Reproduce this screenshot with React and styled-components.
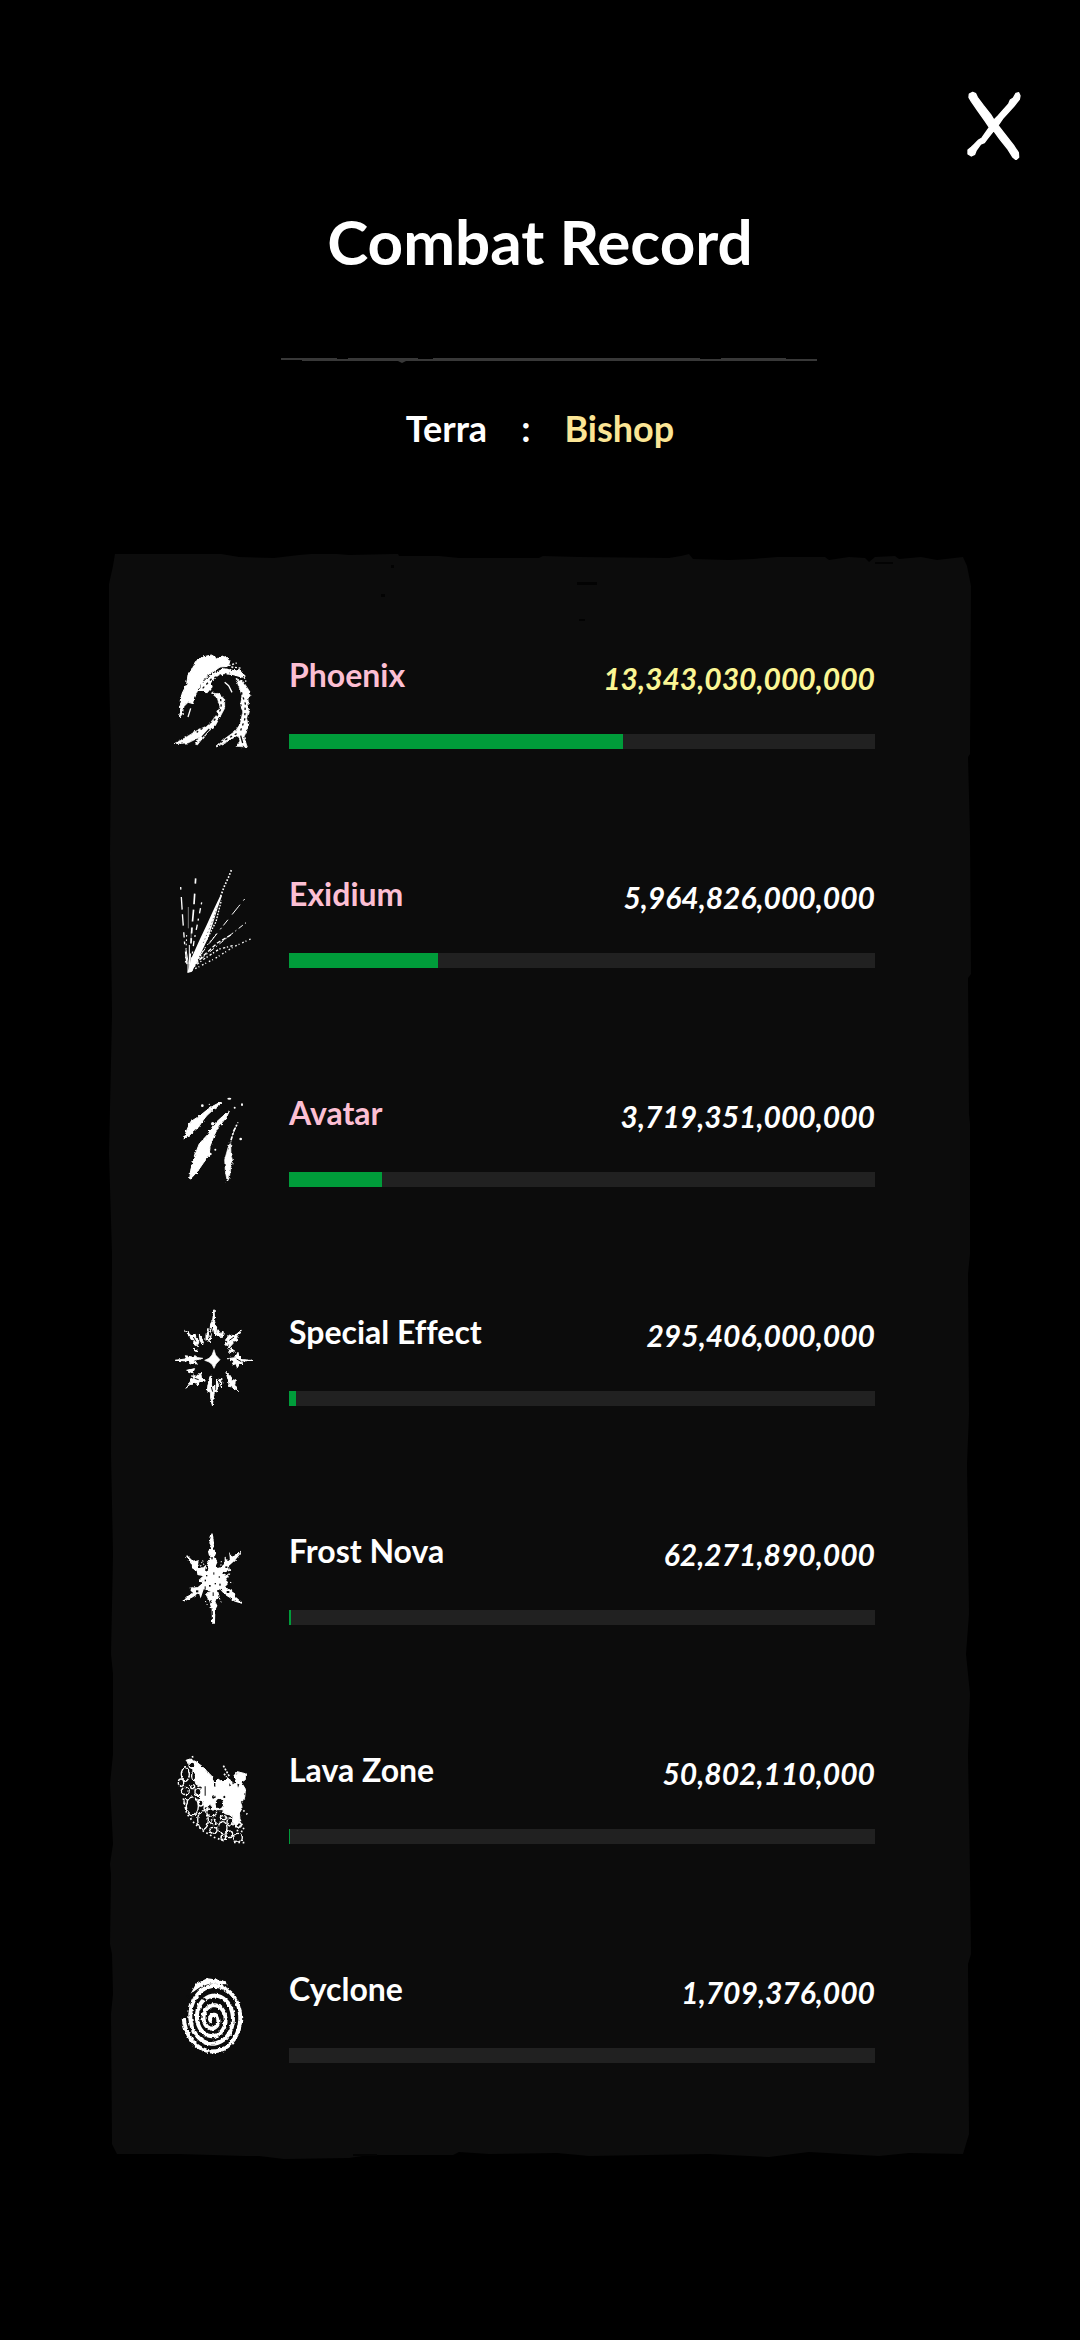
import React from 'react'
import styled, { createGlobalStyle } from "styled-components"

const GlobalStyle = createGlobalStyle`
    * {
        box-sizing: border-box;
    }
    body {
        margin: 0;
        background-color: #000000;
        color: #ffffff;
        font-family: Lato, "Open Sans", sans-serif;
        font-variant-ligatures: none;
    }
`
const Page = styled.main`
    min-height: 100vh;
    display: flex;
    flex-direction: column;
    background-color: #000000;
`
const TopBar = styled.div`
    display: flex;
    justify-content: flex-end;
    padding: 90px 56px 0;
`
const CloseButton = styled.button`
    width: 60px;
    height: 70px;
    padding: 0;
    border: 0;
    background: none;
    cursor: pointer;
    svg {
        display: block;
        width: 100%;
        height: 100%;
    }
`
const Header = styled.header`
    display: flex;
    flex-direction: column;
    align-items: center;
    padding-top: 45px;
`
const Title = styled.h1`
    margin: 0;
    font-size: 62px;
    line-height: 72px;
    font-weight: 700;
`
const Divider = styled.svg`
    width: 560px;
    height: 6px;
    margin: 80px 0 45px;
`
const Hero = styled.p`
    display: flex;
    gap: 34px;
    margin: 0;
    font-size: 36px;
    line-height: 40px;
    font-weight: 700;
`
const HeroClass = styled.span`
    color: #fbe595;
`
const Panel = styled.section`
    position: relative;
    margin: 106px 109px 0;
    padding: 95px 96px 84px 61px;
`
const PanelPaper = styled.svg`
    position: absolute;
    inset: 0;
    width: 100%;
    height: 100%;
`
const SkillList = styled.ul`
    position: relative;
    display: flex;
    flex-direction: column;
    gap: 107px;
    margin: 0;
    padding: 0;
    list-style: none;
`
const SkillRow = styled.li`
    display: flex;
    gap: 31px;
    height: 112px;
`
const SkillIcon = styled.svg`
    flex: none;
    width: 88px;
    height: 112px;
    overflow: visible;
`
const SkillBody = styled.div`
    flex: 1;
    padding-top: 6px;
`
const SkillText = styled.div`
    display: flex;
    justify-content: space-between;
    align-items: flex-start;
    font-weight: 700;
`
const SkillName = styled.span`
    font-size: 32px;
    line-height: 40px;
    color: ${props => props.$main ? "#fcbfd3" : "#ffffff"};
`
const SkillValue = styled.span`
    font-size: 30px;
    line-height: 46px;
    font-style: italic;
    color: ${props => props.$top ? "#fbf694" : "#ffffff"};
`
const Bar = styled.div`
    height: 15px;
    margin-top: 33px;
    background-color: #212121;
`
const BarFill = styled.div`
    height: 100%;
    background-color: #009c3a;
`

const Wave = () => (
    <g>
        <path filter="url(#rough)" stroke="#ffffff" strokeWidth="3" d="M59 258 L62 232 60 212 67 186 80 160 84 132 97 114 106 92 128 78 154 72 172 82 194 76 210 88 205 106 180 108 160 122 142 132 130 150 116 170 104 200 100 218 84 214 72 226 66 250z" />
        <path filter="url(#rough)" d="M116 180 L124 160 140 142 156 128 192 112 224 118 236 114 258 136 246 140 218 132 190 130 168 138 154 154 158 168 140 188 128 180z" />
        <path filter="url(#rough)" stroke="#ffffff" strokeWidth="2" d="M228 142 L250 152 272 186 264 200 266 238 260 262 266 286 252 318 262 348 228 346 240 330 234 312 206 330 168 348 196 322 226 300 240 280 248 244 242 220 246 190 236 166z" />
        <path filter="url(#rough)" stroke="#ffffff" strokeWidth="2" d="M154 186 L178 188 194 206 194 232 180 258 166 284 140 306 112 342 104 338 120 318 84 336 42 338 76 320 108 300 146 282 168 254 180 228 172 202z" />
        <g stroke="#ffffff" strokeWidth="4" fill="none">
            <path d="M92 232 L84 258M194 154 L206 164 216 184" />
            <path strokeDasharray="6 5" d="M206 104 L230 96 M214 108 L246 112 M252 138 L258 152 M142 150 L164 128 M156 146 L144 164" />
        </g>
        <g stroke="#0c0c0c" strokeWidth="4" fill="none">
            <path strokeDasharray="7 9" d="M182 204 L184 232 164 266 110 304 M244 184 L256 218 254 266 240 304 M182 334 L230 308 M128 172 L156 142 210 126" />
            <path d="M242 314 L248 336 M148 294 L126 318" />
        </g>
    </g>
)

const Rays = () => (
    <g stroke="#ffffff" fill="none">
        <path stroke="none" fill="#ffffff" d="M82 366 L96 362 122 308 142 266 158 220 174 168 186 134 180 136 158 182 140 222 120 264 94 322z" />
        <path stroke="#777777" strokeWidth="3" strokeDasharray="4 7" d="M172 170 L152 224 128 280" />
        <path strokeWidth="3" d="M84 364 L84 332 78 296 M88 350 L88 282 M92 352 L102 310" />
        <path strokeWidth="5" strokeDasharray="5 5" d="M182 136 L192 108 205 80 215 55" />
        <path strokeWidth="4" strokeDasharray="5 4" d="M140 266 L168 212 184 148 M102 346 L126 306" />
        <path stroke="#777777" strokeWidth="3" d="M85 168 L85 232 M94 230 L93 272" />
        <path strokeWidth="4" strokeDasharray="8 22 38 14 34 20 16 12" d="M62 108 L68 200 74 280 82 350" />
        <path strokeWidth="5" strokeDasharray="16 30 32 16 36 18 18 14" d="M107 82 L102 160 96 230 88 350" />
        <path strokeWidth="4" strokeDasharray="6 12 16 16" d="M125 154 L116 200 102 270 92 346" />
        <path strokeWidth="3" strokeDasharray="6 16 38 20 22 9" d="M254 144 L236 166 180 236 96 344" />
        <path strokeWidth="3" strokeDasharray="4 8 16 9" d="M258 215 L206 256 150 302 92 350" />
        <path strokeWidth="4" strokeDasharray="5 9 3 6" d="M272 264 L220 288 166 322 92 360" />
        <path strokeWidth="4" strokeDasharray="7 7 4 5" d="M218 284 L178 294 132 324 92 354" />
        <path strokeWidth="4" strokeDasharray="12 6" d="M212 252 L172 276 126 318 98 348" />
        <path strokeWidth="3" strokeDasharray="5 8" d="M170 248 L132 294 110 330 M80 252 L76 340" />
    </g>
)

const Claws = () => (
    <g>
        <path filter="url(#rough)" stroke="#ffffff" strokeWidth="3" d="M72 175 L81 146 92 122 120 104 150 80 180 64 186 66 164 82 140 104 126 122 116 138 94 158z" />
        <path filter="url(#rough)" stroke="#ffffff" strokeWidth="3" d="M89 296 L92 268 104 224 118 188 142 162 162 130 188 106 208 90 200 108 174 140 162 164 150 196 148 222 130 246 112 272z" />
        <path filter="url(#rough)" stroke="#ffffff" strokeWidth="2" d="M202 302 L196 272 194 236 204 200 212 182 213 220 218 240 212 264 208 290z" />
        <path stroke="#ffffff" strokeWidth="5" strokeDasharray="12 5 5 6" d="M213 178 L221 150 234 124" />
        <g>
            <ellipse cx="208" cy="53" rx="6" ry="3" />
            <ellipse cx="246" cy="71" rx="3" ry="4" />
            <circle cx="224" cy="80" r="3" />
            <circle cx="127" cy="74" r="4" />
            <circle cx="148" cy="70" r="2" />
            <circle cx="242" cy="174" r="4" />
            <circle cx="166" cy="206" r="3" />
            <circle cx="151" cy="219" r="4" />
            <circle cx="158" cy="128" r="5" />
        </g>
    </g>
)

const Burst = () => (
    <g>
        <path stroke="#ffffff" strokeWidth="2" d="M162 176 L167 192 180 206 168 219 162 232 156 220 147 213 134 208 147 202 156 192z" />
        <g filter="url(#rough)" stroke="#ffffff" strokeWidth="3">
            <path d="M162 56 L164 92 170 110 168 126 172 132 164 130 160 110 154 124 150 118 152 98 158 88z" />
            <path d="M144 112 L146 134 138 148 138 130z M154 128 L150 156 145 148z M174 116 L182 128 190 122 188 136 178 136 170 128z" />
            <path d="M74 118 L96 132 106 130 108 142 118 150 112 164 100 158 104 148 94 146 88 134z M118 132 L130 150 128 162 120 148z M100 170 L114 182 104 180z" />
            <path d="M244 118 L224 134 208 132 196 148 204 150 196 164 208 158 206 172 220 156 218 148 228 150 232 136z M212 172 L224 180 206 184z" />
            <path d="M46 208 L80 204 76 194 96 198 106 194 112 200 128 202 104 208 112 220 98 216 92 220 82 210z" />
            <path d="M276 208 L248 206 236 194 234 184 226 200 202 203 222 209 216 222 228 218 232 230 240 216 246 222 248 210z" />
            <path d="M78 292 L92 274 88 264 102 264 98 254 114 256 122 244 124 258 136 270 118 272 112 282 104 272 98 280 90 280z M80 238 L104 232 98 246z" />
            <path d="M236 304 L222 290 208 286 206 272 198 244 210 256 216 266 226 268 224 282z" />
            <path d="M157 344 L152 320 152 304 142 300 144 280 150 256 155 256 154 282 162 298 164 282 164 300 160 318z M170 264 L176 284 168 304z M178 268 L186 262 184 288z" />
        </g>
        <path stroke="#ffffff" strokeWidth="3" d="M46 208 H80 M248 208 H276 M161 56 V88 M157 318 V344" />
        <path stroke="#0c0c0c" strokeWidth="3" d="M158 108 L154 120 M100 138 L108 152 M222 138 L208 148 M230 204 L244 212 M104 262 L116 266 M154 288 L158 302" />
    </g>
)

const Frost = () => (
    <g>
        <path filter="url(#rough)" stroke="#ffffff" strokeWidth="4" d="M156 68 L160 96 158 112 166 124 160 138 170 154 162 172 182 172 196 158 196 144 204 154 212 146 210 130 218 140 242 124 224 146 204 164 208 178 186 184 194 196 206 192 194 206 204 216 190 230 204 234 218 242 222 256 246 276 224 270 206 256 196 250 180 232 172 238 178 262 168 262 164 272 170 284 164 296 163 336 158 336 157 296 152 280 160 262 148 268 140 252 152 238 130 232 122 256 118 244 96 258 72 270 86 256 102 244 92 232 114 230 124 222 130 210 118 208 132 194 114 190 112 178 100 174 96 160 80 134 100 154 114 150 112 162 128 174 136 166 132 184 148 176 142 158 152 146 146 122 156 108 150 96z" />
        <g fill="#0c0c0c">
            <rect x="138" y="192" width="4" height="4" />
            <rect x="134" y="206" width="4" height="5" />
            <rect x="160" y="184" width="3" height="7" />
            <rect x="176" y="196" width="4" height="4" />
            <rect x="164" y="216" width="4" height="4" />
            <rect x="178" y="218" width="4" height="6" />
            <rect x="147" y="222" width="5" height="5" />
            <rect x="154" y="138" width="4" height="7" />
            <rect x="114" y="164" width="7" height="7" />
            <rect x="196" y="166" width="6" height="5" />
            <rect x="200" y="240" width="8" height="6" />
            <rect x="108" y="238" width="7" height="6" />
            <rect x="134" y="226" width="3" height="9" />
            <rect x="158" y="244" width="3" height="11" />
        </g>
        <path stroke="#ffffff" strokeWidth="3" strokeDasharray="4 6" fill="none" d="M128 148 L134 172 M184 150 L182 170 M210 214 L220 216 M178 262 L184 274 M136 270 L142 282 M94 230 L104 228 M204 200 L208 184 M122 166 L126 152" />
    </g>
)

const lavaCells = [
    [76, 100, 12, 20], [96, 72, 9, 9], [101, 106, 6, 13], [63, 125, 8, 11], [76, 150, 12, 11],
    [98, 137, 6, 6], [114, 153, 9, 11], [97, 196, 18, 28], [77, 183, 5, 8], [122, 186, 7, 9],
    [129, 237, 16, 28], [160, 168, 6, 7], [178, 188, 13, 17], [193, 168, 5, 6], [155, 214, 15, 11],
    [160, 243, 8, 8], [188, 260, 13, 18], [210, 243, 9, 12], [160, 268, 11, 9], [234, 290, 13, 13],
    [208, 280, 10, 10], [236, 252, 8, 7], [138, 202, 6, 5], [190, 230, 9, 6], [190, 289, 7, 7]
]

const Lava = () => (
    <g>
        <path filter="url(#rough)" stroke="#ffffff" strokeWidth="3" d="M78 58 L90 54 108 62 126 76 142 92 154 104 162 126 174 114 188 124 202 110 216 122 216 132 228 126 222 104 232 92 256 98 256 116 244 124 256 144 254 172 242 180 246 202 238 216 240 234 236 262 220 250 218 224 194 218 188 206 164 206 150 190 134 202 128 180 118 168 124 138 108 130 100 104 98 80z" />
        <path stroke="#ffffff" strokeWidth="5" strokeDasharray="6 4" fill="none" d="M190 74 L200 92 208 106 M192 98 L200 108" />
        <g fill="#0c0c0c" stroke="#ffffff" strokeWidth="4" filter="url(#rough)">
            {lavaCells.map(([x, y, rx, ry]) => (
                <ellipse key={x + "-" + y} cx={x} cy={y} rx={rx} ry={ry} />
            ))}
        </g>
        <path stroke="#ffffff" strokeWidth="5" strokeDasharray="5 8" fill="none" d="M97 45 L100 56 M70 172 L80 218 104 248 130 270 160 288 194 300 M222 304 L260 305 M250 208 L262 220 M240 236 L252 266 M230 268 L248 272" />
        <path fill="#0c0c0c" d="M134 136 L137 136 137 164 134 164z M162 126 L166 126 166 138 162 136z M232 128 L238 130 234 140z M208 126 L213 134 208 136z" />
    </g>
)

const spiral = () => {
    const points = []
    for (let turn = 0.15; turn <= 4.3; turn += 0.025) {
        const angle = turn * Math.PI * 2 + 1.2
        const x = 157 + turn * 21 * Math.cos(angle) + turn
        const y = 178 + turn * 26 * Math.sin(angle) - turn * 3
        points.push(x.toFixed(1) + " " + y.toFixed(1))
    }
    return "M" + points.join("L")
}

const Cyclone = () => (
    <g>
        <path filter="url(#rough)" d={spiral()} fill="none" stroke="#ffffff" strokeWidth="12" />
        <path filter="url(#rough)" d="M92 98 L108 68 142 52 188 58 205 70 150 68 124 76z" />
        <path d="M80 104 L90 112 M194 100 L204 106 M208 72 L202 80 M146 272 L150 288 M130 112 L138 118" stroke="#0c0c0c" strokeWidth="6" />
    </g>
)

const skills = [
    { name: "Phoenix", value: 13343030000000, main: true, box: "30 54 264 336", Icon: Wave },
    { name: "Exidium", value: 5964826000000, main: true, box: "30 51 264 336", Icon: Rays },
    { name: "Avatar", value: 3719351000000, main: true, box: "30 18 264 336", Icon: Claws },
    { name: "Special Effect", value: 295406000000, box: "30 45 264 336", Icon: Burst },
    { name: "Frost Nova", value: 62271890000, box: "30 42 264 336", Icon: Frost },
    { name: "Lava Zone", value: 50802110000, box: "30 9 264 336", Icon: Lava },
    { name: "Cyclone", value: 1709376000, box: "30 6 264 336", Icon: Cyclone }
]
const total = skills.reduce((sum, skill) => sum + skill.value, 0)

const App = () => {
  return (
    <Page>
        <GlobalStyle />
        <TopBar>
                <CloseButton aria-label="Close">
                        <svg viewBox="72 60 180 210" fill="#ffffff" stroke="#ffffff" strokeWidth="4" strokeLinejoin="round">
                                <path d="M88 72 L98 67 107 71 112 82 130 106 152 134 162 150 174 138 206 102 211 90 220 84 228 70 236 68 240 77 238 88 222 108 188 146 174 166 202 202 222 228 235 248 236 262 228 269 219 262 204 238 180 208 161 182 142 206 133 218 122 222 108 242 104 253 94 258 84 252 84 240 94 232 102 224 116 210 126 204 148 172 136 154 112 120 94 94 87 82z" />
                        </svg>
                </CloseButton>
        </TopBar>
        <Header>
                <Title>Combat Record</Title>
                <Divider viewBox="0 0 560 6" fill="#383838" aria-hidden="true">
                        <path d="M21 1H77V2H88V1H158V2H173V1H440V2H461V1H526V2H557V4H146L142 6 138 4H42V3H21z" />
                </Divider>
                <Hero>
                        <span>Terra</span>
                        <span>:</span>
                        <HeroClass>Bishop</HeroClass>
                </Hero>
        </Header>
        <Panel>
                <PanelPaper viewBox="0 0 862 1605" preserveAspectRatio="none" fill="#0c0c0c" aria-hidden="true">
                        <defs>
                                <filter id="rough" x="-10%" y="-10%" width="120%" height="120%" colorInterpolationFilters="sRGB">
                                        <feTurbulence type="fractalNoise" baseFrequency="0.11" numOctaves="2" seed="4" result="noise" />
                                        <feDisplacementMap in="SourceGraphic" in2="noise" scale="10" xChannelSelector="R" yChannelSelector="G" />
                                </filter>
                        </defs>
                        <path d="M6 0 L70 -1 112 0 130 3 165 4 190 1 215 -1 240 1 284 0 287 -4 290 2 330 2 350 4 430 4 434 2 470 3 560 4 572 2 580 0 584 5 620 6 644 5 668 3 716 3 720 6 740 3 756 4 760 8 766 3 786 2 790 5 812 3 828 6 854 3 858 12 862 32 861 200 859 203 861 280 862 420 859 424 860 560 861 570 861 700 859 720 860 860 858 910 860 1060 857 1100 861 1140 859 1200 861 1320 862 1400 859 1410 860 1580 854 1600 800 1599 770 1602 700 1598 660 1603 600 1600 480 1602 448 1599 380 1600 350 1598 344 1601 260 1601 240 1604 175 1605 150 1602 136 1602 70 1600 8 1600 3 1590 2 1460 4 1440 3 1400 1 1390 2 1320 1 1310 4 1290 1 1230 4 1200 4 1120 2 1100 4 1000 2 900 3 700 0 600 3 460 1 300 2 200 0 120 0 30 4 12z" />
                        <path fill="#030303" d="M468 28H488V31H468z M470 65H476V67H470z M272 40H276V43H272z M282 11H285V14H282z M766 8H784V10H766z M244 1600H268V1602H244z" />
                </PanelPaper>
                <SkillList>
                        {skills.map(({ name, value, main, box, Icon }, index) => (
                                <SkillRow key={name}>
                                        <SkillIcon viewBox={box} fill="#ffffff" aria-hidden="true">
                                                <Icon />
                                        </SkillIcon>
                                        <SkillBody>
                                                <SkillText>
                                                        <SkillName $main={main}>{name}</SkillName>
                                                        <SkillValue $top={index === 0}>{value.toLocaleString("en-US")}</SkillValue>
                                                </SkillText>
                                                <Bar>
                                                        <BarFill style={{ width: (value / total) * 100 + "%" }} />
                                                </Bar>
                                        </SkillBody>
                                </SkillRow>
                        ))}
                </SkillList>
        </Panel>
    </Page>
  )
}

export default App
